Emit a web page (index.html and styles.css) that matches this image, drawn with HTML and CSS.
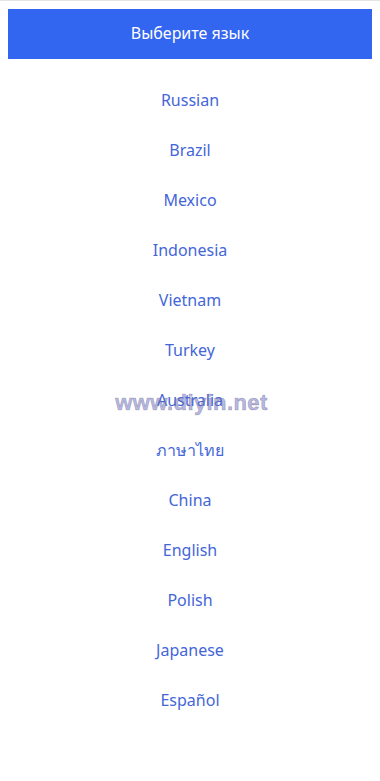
FILE: index.html
```html
<!DOCTYPE html>
<html lang="ru">
<head>
<meta charset="utf-8">
<title>Выберите язык</title>
<link rel="stylesheet" href="styles.css">
</head>
<body>
<div class="topline"></div>
<div class="page">
  <header class="header">Выберите язык</header>
  <ul class="langs">
    <li><a href="#">Russian</a></li>
    <li><a href="#">Brazil</a></li>
    <li><a href="#">Mexico</a></li>
    <li><a href="#">Indonesia</a></li>
    <li><a href="#">Vietnam</a></li>
    <li><a href="#">Turkey</a></li>
    <li><a href="#">Australia</a></li>
    <li><a href="#">ภาษาไทย</a></li>
    <li><a href="#">China</a></li>
    <li><a href="#">English</a></li>
    <li><a href="#">Polish</a></li>
    <li><a href="#">Japanese</a></li>
    <li><a href="#">Español</a></li>
  </ul>
</div>
<div class="watermark">www.diyin.net</div>
</body>
</html>
```
FILE: styles.css
```css
html, body {
  margin: 0;
  padding: 0;
  background: #ffffff;
}
body {
  font-family: "Noto Sans", "Open Sans", sans-serif;
  position: relative;
  min-height: 781px;
}
.topline {
  height: 1px;
  background: #e4e4e4;
}
.page {
  padding: 8px;
}
.header {
  height: 50px;
  line-height: 49px;
  background: #3366f0;
  color: #ffffff;
  text-align: center;
  font-size: 16px;
}
.langs {
  list-style: none;
  margin: 16px 0 0;
  padding: 0;
}
.langs li {
  height: 50px;
  line-height: 50px;
  text-align: center;
  font-size: 16px;
}
.langs a {
  color: #4466d8;
  text-decoration: none;
}
.watermark {
  position: absolute;
  left: 3px;
  right: 0;
  top: 389px;
  text-align: center;
  font-family: "Liberation Sans", Arial, sans-serif;
  font-weight: bold;
  font-size: 22px;
  line-height: 28px;
  color: rgba(120, 120, 200, 0.55);
  -webkit-text-stroke: 0.6px rgba(90, 90, 120, 0.45);
  letter-spacing: 0.4px;
  pointer-events: none;
}
```
